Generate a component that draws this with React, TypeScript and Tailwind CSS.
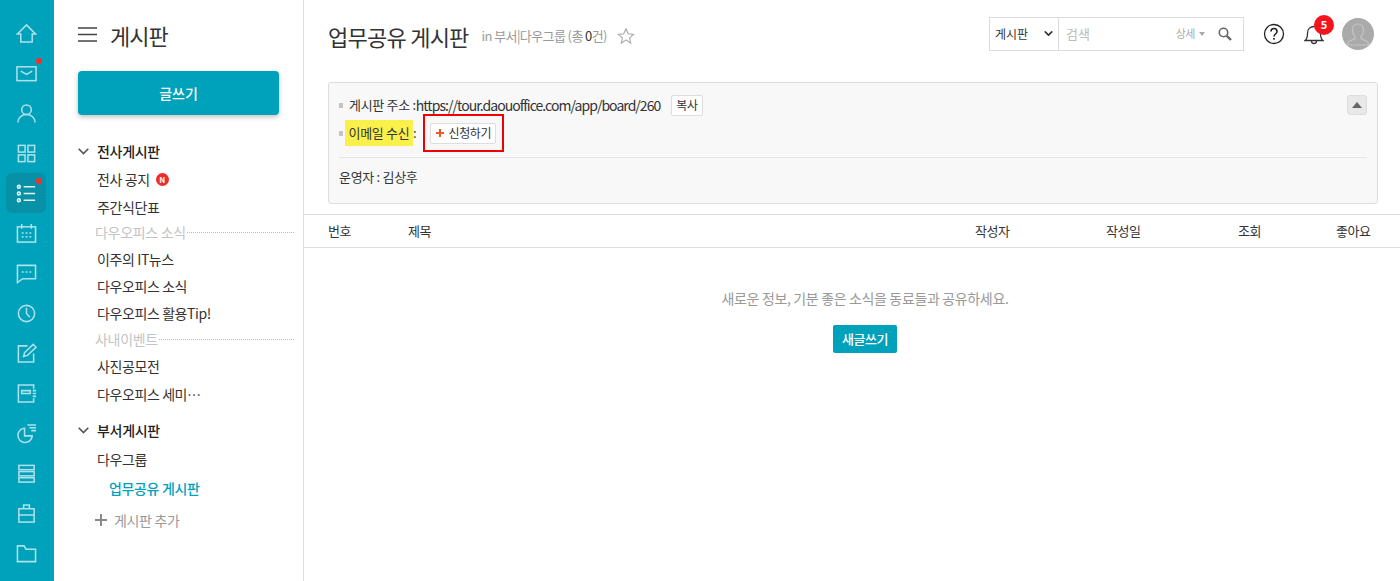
import React from 'react'
import { ChevronDown } from 'lucide-react'

const font = { fontFamily: '"Noto Sans CJK KR", "Noto Sans", sans-serif' }

const RailIcon = ({ children, active, dot }: { children: React.ReactNode; active?: boolean; dot?: boolean }) => (
    <div className={`relative w-10 h-10 rounded-md flex items-center justify-center ${active ? 'bg-[#0890a6]' : ''}`}>
        <svg width="21" height="21" viewBox="0 0 22 22" fill="none" stroke={active ? '#e6f7fa' : '#aee1e9'} strokeWidth="1.6">
            {children}
        </svg>
        {dot && <span className="absolute top-[5px] right-[4px] w-[6px] h-[6px] rounded-full bg-[#ff2a2a]" />}
    </div>
)

const Rail = () => (
    <div className="w-[54px] shrink-0 bg-[#00a2bb] flex flex-col items-center pt-[13px] pr-[2px]">
        <RailIcon><path d="M1.500 11.500 11 2l9.500 9.500H17v8.500H5v-8.500z" /></RailIcon>
        <RailIcon dot><rect x="1" y="4" width="20" height="14.500" /><path d="M5 8.500l6 3.500 6-3.500" /></RailIcon>
        <RailIcon><circle cx="11" cy="7" r="5" /><path d="M2 20.500c0-5 4-8.500 9-8.500s9 3.500 9 8.500" /></RailIcon>
        <RailIcon><rect x="2.500" y="2.500" width="7" height="7" /><rect x="12.500" y="2.500" width="7" height="7" /><rect x="2.500" y="12.500" width="7" height="7" /><rect x="12.500" y="12.500" width="7" height="7" /></RailIcon>
        <RailIcon active dot><circle cx="3" cy="4" r="1.500" /><circle cx="3" cy="11" r="1.500" /><circle cx="3" cy="18" r="1.500" /><path d="M8 4h12M8 11h12M8 18h12" /></RailIcon>
        <RailIcon><rect x="1.500" y="4" width="19" height="16" /><path d="M6 1v5M16 1v5M6 10.500h2M10 10.500h2M14 10.500h2M6 14.500h2M10 14.500h2M14 14.500h2" /></RailIcon>
        <RailIcon><path d="M1.500 2.500h19v14H7l-5.500 4z" /><path d="M6 9.500h2M10 9.500h2M14 9.500h2" /></RailIcon>
        <RailIcon><circle cx="11" cy="11" r="8.500" /><path d="M11 5v6l3.500 4" /></RailIcon>
        <RailIcon><path d="M12 3H2.500v17h16v-9" /><path d="M8 14l1-4L18 1.500l3 3L12 13z" /></RailIcon>
        <RailIcon><path d="M18.500 6V2h-16v18h16v-4" /><path d="M6 8h9v3H6zM17.500 8H21M17.500 11H21M17.500 14H21" /></RailIcon>
        <RailIcon><path d="M9 5.500a7.500 7.500 0 1 0 8 8H9z" /><path d="M12 2h9M14 5h7M16 8h5" /></RailIcon>
        <RailIcon><rect x="3" y="2.500" width="16" height="4.500" /><rect x="3" y="9" width="16" height="4.500" /><rect x="3" y="15.500" width="16" height="4.500" /></RailIcon>
        <RailIcon><rect x="3" y="6" width="16" height="14" /><path d="M3 12.500h16M8 6V2h6v4" /></RailIcon>
        <RailIcon><path d="M1.500 19.500V3h7l2 3.500h10v13z" /></RailIcon>
    </div>
)

const NavGroup = ({ label, className }: { label: string; className: string }) => (
    <div className={`flex items-center gap-2 pl-6 text-[14px] font-medium text-[#222] tracking-[-0.3px] ${className}`}>
        <svg width="11" height="7" viewBox="0 0 11 7" fill="none" stroke="#555" strokeWidth="1.6"><path d="M.7.8l4.800 4.800L10.300.8" /></svg>
        <span>{label}</span>
    </div>
)

const NavItem = ({ children, className = 'h-[27px]' }: { children: React.ReactNode; className?: string }) => (
    <div className={`pl-[43px] flex items-center text-[14px] text-[#333] tracking-[-0.4px] ${className}`}>{children}</div>
)

const NavTitle = ({ label }: { label: string }) => (
    <div className="h-[25px] pl-[41px] pr-[9px] flex items-center gap-px text-[14px] text-[#c4c4c4] tracking-[-0.3px]">
        <span>{label}</span>
        <span className="flex-1 border-t border-dotted border-[#bbb]" />
    </div>
)

const SideNav = () => (
    <div className="w-[250px] shrink-0 border-r border-[#ddd] bg-white">
        <div className="h-[71px] pl-6 flex items-start pt-[19px]">
            <svg width="19" height="15" viewBox="0 0 19 15" className="mt-[8px]" stroke="#444" strokeWidth="1.6"><path d="M0 1h19M0 7.500h19M0 14h19" /></svg>
            <span className="ml-[13px] text-[22px] leading-[33px] text-[#333] tracking-[-1px]">게시판</span>
        </div>
        <div className="px-6">
            <button className="w-[201px] h-11 rounded-[4px] bg-[#00a2bb] text-white text-[14px] font-medium shadow-[0_2px_5px_rgba(0,0,0,0.25)]">글쓰기</button>
        </div>
        <NavGroup label="전사게시판" className="mt-[24px] h-[25px]" />
        <NavItem className="h-[31px]">
            전사 공지
            <span className="ml-[6px] w-[13px] h-[13px] rounded-full bg-[#f02b2b] text-white text-[8px] font-bold leading-none flex items-center justify-center">N</span>
        </NavItem>
        <NavItem className="h-[25px]">주간식단표</NavItem>
        <NavTitle label="다우오피스 소식" />
        <NavItem className="h-[29px]">이주의 IT뉴스</NavItem>
        <NavItem className="h-[25px]">다우오피스 소식</NavItem>
        <NavItem className="h-[28px]">다우오피스 활용Tip!</NavItem>
        <NavTitle label="사내이벤트" />
        <NavItem className="h-[29px]">사진공모전</NavItem>
        <NavItem className="h-[26px]">다우오피스 세미…</NavItem>
        <NavGroup label="부서게시판" className="mt-[10px] h-[27px]" />
        <NavItem className="h-[30px]">다우그룹</NavItem>
        <div className="h-[28px] pl-[55px] flex items-center text-[14px] font-medium text-[#00a2bb] tracking-[-0.35px]">업무공유 게시판</div>
        <div className="mt-[4px] h-[28px] pl-[41px] flex items-center gap-[7px] text-[14px] text-[#999] tracking-[-0.35px]">
            <svg width="12" height="12" viewBox="0 0 12 12" stroke="#888" strokeWidth="2"><path d="M6 0v12M0 6h12" /></svg>
            게시판 추가
        </div>
    </div>
)

const TopTools = () => (
    <div className="flex items-center">
        <div className="w-[255px] h-[34px] border border-[#dcdcdc] flex items-center">
            <div className="w-[69px] h-full border-r border-[#dcdcdc] flex items-center justify-between pl-[5px] pr-[3px] text-[12px] text-[#333]">
                게시판
                <ChevronDown size={13} strokeWidth={3} color="#333" />
            </div>
            <span className="ml-[7px] text-[13px] text-[#bbb]">검색</span>
            <span className="ml-auto text-[11px] text-[#aaa] tracking-[-0.5px]">상세</span>
            <span className="ml-[4px] w-0 h-0 border-x-[3.500px] border-x-transparent border-t-[4px] border-t-[#aaa]" />
            <svg width="14" height="14" viewBox="0 0 14 14" fill="none" stroke="#666" className="ml-[13px] mr-[11px]">
                <circle cx="5.500" cy="5.500" r="4.200" strokeWidth="1.6" />
                <path d="M8.800 8.800 13 13" strokeWidth="2.400" />
            </svg>
        </div>
        <svg width="22" height="22" viewBox="0 0 22 22" fill="none" className="ml-[19px]" stroke="#222" strokeWidth="1.3">
            <circle cx="11" cy="11" r="9.500" />
            <path d="M8 8.500c0-4 6-4 6 0 0 2.500-3 2.500-3 5M11 15v1.800" strokeWidth="1.600" />
        </svg>
        <div className="relative ml-[19px] w-[20px] h-[22px]">
            <svg width="20" height="22" viewBox="0 0 20 22" fill="none" stroke="#333" strokeWidth="1.3">
                <path d="M1 17.500c2-1.500 2.500-3 2.500-7 0-4.500 3-7 6.500-7s6.500 2.500 6.500 7c0 4 .5 5.500 2.500 7z" />
                <path d="M7.500 18a2.500 2.500 0 0 0 5 0" />
            </svg>
            <span className="absolute -top-[8px] left-[10px] w-5 h-5 rounded-full bg-[#f5141e] text-white text-[11px] font-bold flex items-center justify-center">5</span>
        </div>
        <div className="ml-[18px] w-8 h-8 rounded-full bg-[#aaa] overflow-hidden">
            <svg width="32" height="32" viewBox="0 0 32 32" fill="none" stroke="#c4c4c4" strokeWidth="1.2">
                <path d="M16 6c-3.500 0-5.500 2.500-5.500 6 0 2.500 1 5 2.500 6.500v2c-2 1.500-6 2-7.500 4.500v2h21v-2c-1.500-2.500-5.500-3-7.500-4.500v-2c1.500-1.500 2.500-4 2.500-6.500 0-3.500-2-6-5.500-6z" />
            </svg>
        </div>
    </div>
)

const Bullet = () => <span className="w-[4px] h-[5px] bg-[#c4c4c4] shrink-0" />

const InfoBox = () => (
    <div className="relative ml-6 mr-[22px] mt-[15px] h-[122px] bg-[#f8f8f8] border border-[#ddd] rounded-[3px] px-[10px] text-[13px] text-[#333] tracking-[-0.3px]">
        <div className="flex items-center h-[24px] mt-[10px]">
            <Bullet />
            <span className="ml-[6px]">게시판 주소 :</span>
            <span className="text-[14px] tracking-[-0.97px]">https://tour.daouoffice.com/app/board/260</span>
            <span className="ml-[11px] h-[21px] px-[4px] bg-white border border-[#ddd] rounded-[2px] flex items-center text-[12px]">복사</span>
        </div>
        <div className="flex items-center h-[30px] mt-[1px]">
            <Bullet />
            <span className="ml-[2px] h-[26px] w-[68px] bg-[#faf04c] flex items-center justify-center text-[13px]">이메일 수신</span>
            <span>:</span>
            <div className="ml-[7px] w-[81px] h-[38px] border-[2px] border-[#f00000] flex items-center justify-center shrink-0">
                <span className="mr-px h-[21px] w-[66px] bg-white border border-[#ddd] rounded-[2px] flex items-center justify-center gap-[5px] text-[12px] tracking-[-0.4px]">
                    <svg width="8" height="8" viewBox="0 0 8 8" stroke="#ee5a2a" strokeWidth="2"><path d="M4 0v8M0 4h8" /></svg>
                    신청하기
                </span>
            </div>
        </div>
        <div className="mt-[9px] border-t border-[#e6e6e6] pt-[9px] leading-[19px]">운영자 : 김상후</div>
        <span className="absolute right-[10px] top-[12px] w-5 h-5 rounded-[3px] bg-[#e8e8e8] border border-[#ddd] flex items-center justify-center">
            <span className="w-0 h-0 border-x-[5px] border-x-transparent border-b-[6px] border-b-[#666]" />
        </span>
    </div>
)

const BoardTable = () => (
    <div className="mt-[10px]">
        <div className="h-[34px] border-y border-[#ddd] flex items-center pl-6 text-[13px] text-[#333] tracking-[-0.4px]">
            <span className="w-[80px]">번호</span>
            <span className="flex-1">제목</span>
            <span className="w-[131px]">작성자</span>
            <span className="w-[132px]">작성일</span>
            <span className="w-[98px]">조회</span>
            <span className="w-[64px]">좋아요</span>
        </div>
        <div className="flex flex-col items-center pt-[40px] pl-[26px]">
            <p className="text-[14px] leading-[21px] text-[#999] tracking-[-0.35px]">새로운 정보, 기분 좋은 소식을 동료들과 공유하세요.</p>
            <button className="mt-[16px] w-[64px] h-[28px] rounded-[2px] bg-[#00a2bb] text-white text-[13px] font-medium tracking-[-0.5px]">새글쓰기</button>
        </div>
    </div>
)

const App = () => {
    return (
        <div style={font} className="flex w-full h-[581px] overflow-hidden bg-white">
            <Rail />
            <SideNav />
            <div className="flex-1 min-w-0">
                <div className="h-[67px] pl-6 pr-[26px] flex items-center justify-between">
                    <div className="flex items-center pt-[5px]">
                        <h1 className="text-[22px] leading-[33px] text-[#333] tracking-[-0.75px]">업무공유 게시판</h1>
                        <span className="ml-[13px] text-[13px] text-[#999] tracking-[-0.6px]">in 부서|다우그룹 (총 <span className="text-[#333]">0</span>건)</span>
                        <svg width="18" height="18" viewBox="0 0 24 24" fill="none" stroke="#aaa" strokeWidth="1.500" className="ml-[10px]">
                            <path d="M12 2.500l3 6.500 7 .8-5.200 4.800 1.400 7L12 17.200 5.800 21.600l1.400-7L2 9.800l7-.8z" />
                        </svg>
                    </div>
                    <TopTools />
                </div>
                <InfoBox />
                <BoardTable />
            </div>
        </div>
    )
}

export default App
